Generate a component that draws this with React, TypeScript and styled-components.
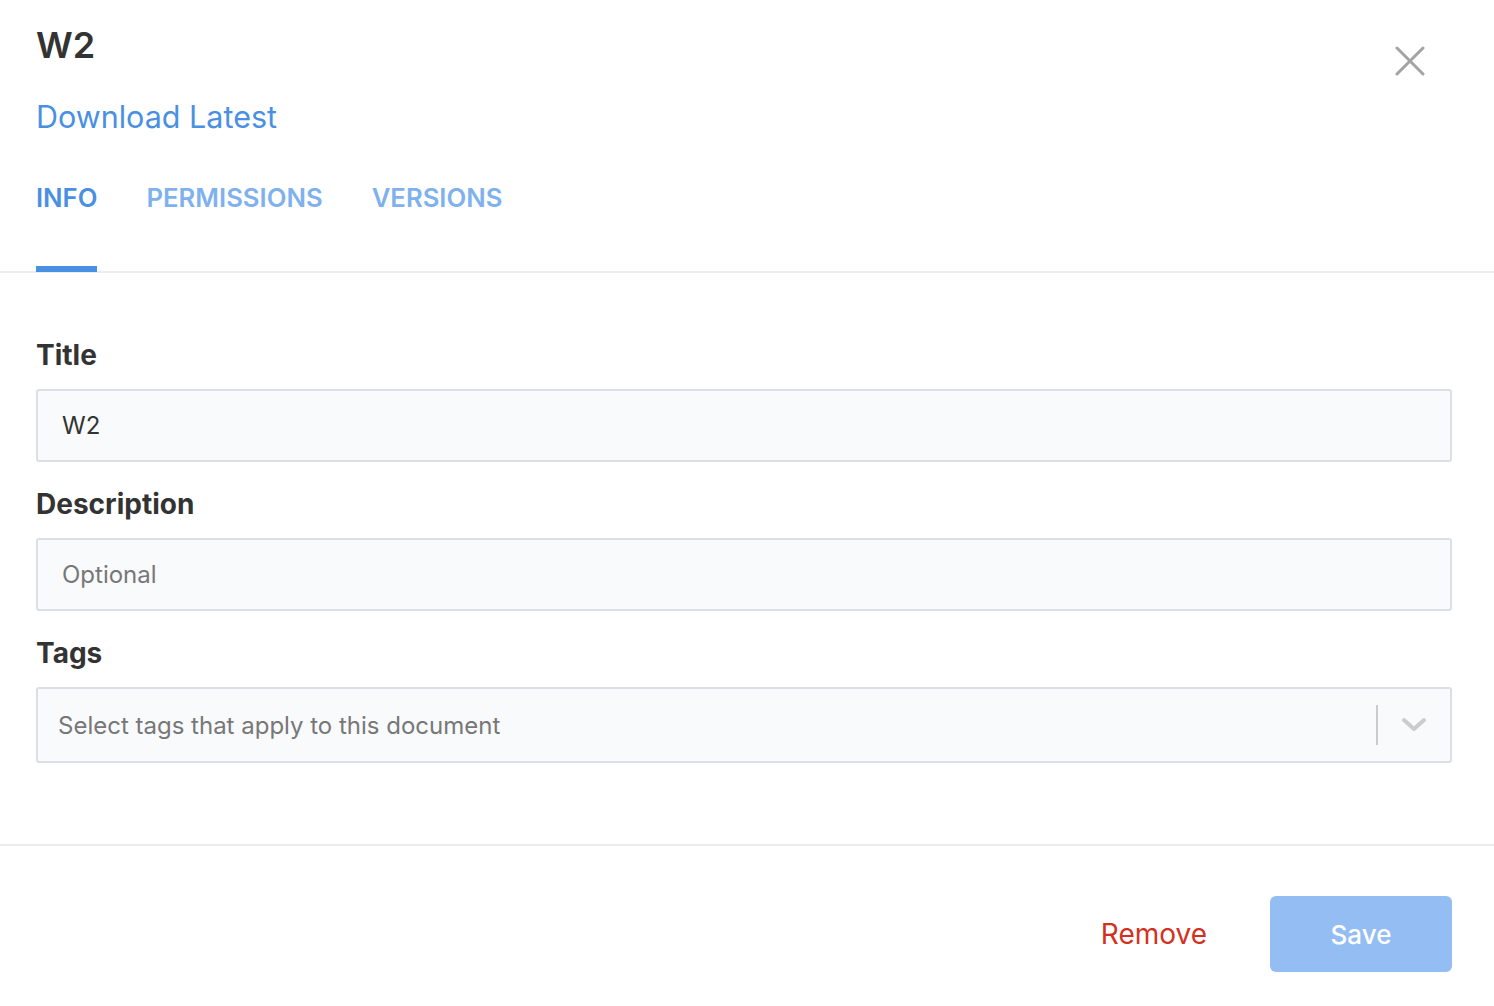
import React from 'react';
import styled, { createGlobalStyle } from 'styled-components';

const blue = '#4a90e2';
const lightBlue = '#7fb1ef';
const textDark = '#333333';
const borderColor = '#dcdee6';

const GlobalStyle = createGlobalStyle`
  html, body {
    margin: 0;
    padding: 0;
    background: #fff;
  }
  body {
    font-family: Inter, "Noto Sans", "Liberation Sans", sans-serif;
    color: ${textDark};
  }
  * { box-sizing: border-box; }
`;

const Modal = styled.div`
  width: 1494px;
  min-height: 1006px;
  display: flex;
  flex-direction: column;
`;

const Header = styled.div`
  display: flex;
  justify-content: space-between;
  align-items: flex-start;
  padding: 23px 42px 0 36px;
`;

const HeaderText = styled.div`
  display: flex;
  flex-direction: column;
`;

const DocTitle = styled.h1`
  margin: 0;
  font-size: 36px;
  line-height: 44px;
  font-weight: 600;
  color: ${textDark};
`;

const DownloadLink = styled.a`
  margin-top: 32px;
  font-size: 30.5px;
  line-height: 36px;
  color: ${blue};
  text-decoration: none;
  cursor: pointer;
`;

const CloseButton = styled.button`
  margin: 22px 26px 0 0;
  width: 32px;
  height: 32px;
  padding: 0;
  border: none;
  background: transparent;
  display: flex;
  align-items: center;
  justify-content: center;
  cursor: pointer;
`;

const TabBar = styled.div`
  display: flex;
  gap: 49px;
  padding: 0 36px;
  margin-top: 47px;
  border-bottom: 2px solid #ecedf1;
`;

const Tab = styled.div<{ $active?: boolean }>`
  font-size: 25.7px;
  line-height: 32px;
  font-weight: 600;
  color: ${p => (p.$active ? blue : lightBlue)};
  padding-bottom: 52px;
  border-bottom: 6px solid ${p => (p.$active ? blue : 'transparent')};
  margin-bottom: -1px;
  cursor: pointer;
`;

const Form = styled.div`
  display: flex;
  flex-direction: column;
  padding: 65px 42px 81px 36px;
  border-bottom: 2px solid #ecedf1;
`;

const Field = styled.div`
  display: flex;
  flex-direction: column;
  gap: 17px;
  & + & {
    margin-top: 25px;
  }
`;

const Label = styled.label`
  font-size: 28px;
  line-height: 34px;
  font-weight: 700;
  color: ${textDark};
`;

const TextInput = styled.input`
  height: 73px;
  width: 100%;
  border: 2px solid ${borderColor};
  border-radius: 3px;
  background: #f9fafc;
  padding: 0 24px;
  font-family: inherit;
  font-size: 24px;
  color: ${textDark};
  outline: none;
  &::placeholder {
    color: #777;
  }
`;

const SelectBox = styled.div`
  height: 76px;
  display: flex;
  align-items: center;
  border: 2px solid ${borderColor};
  border-radius: 3px;
  background: #f9fafc;
  padding-left: 20px;
  cursor: pointer;
`;

const Placeholder = styled.span`
  flex: 1;
  font-size: 24px;
  color: #777;
`;

const Separator = styled.span`
  width: 2px;
  height: 40px;
  background: #cccccc;
`;

const Indicator = styled.span`
  width: 72px;
  display: flex;
  align-items: center;
  justify-content: center;
`;

const Footer = styled.div`
  display: flex;
  justify-content: flex-end;
  align-items: center;
  gap: 63px;
  padding: 50px 42px 34px 36px;
`;

const RemoveButton = styled.button`
  border: none;
  background: transparent;
  color: #d3311f;
  font-family: inherit;
  font-size: 28px;
  padding: 0;
  height: 76px;
  cursor: pointer;
`;

const SaveButton = styled.button`
  width: 182px;
  height: 76px;
  border: none;
  border-radius: 6px;
  background: #93bdf3;
  color: #fff;
  font-family: inherit;
  font-size: 26px;
  font-weight: 500;
  cursor: pointer;
`;

const tabs = ['INFO', 'PERMISSIONS', 'VERSIONS'];

export default function App() {
  return (
    <>
      <GlobalStyle />
      <Modal>
        <Header>
          <HeaderText>
            <DocTitle>W2</DocTitle>
            <DownloadLink>Download Latest</DownloadLink>
          </HeaderText>
          <CloseButton aria-label="Close">
            <svg width="30" height="30" viewBox="0 0 30 30">
              <path d="M2 2 L28 28 M28 2 L2 28" stroke="#a3a3a3" strokeWidth="3" strokeLinecap="round" />
            </svg>
          </CloseButton>
        </Header>

        <TabBar>
          {tabs.map((t, i) => (
            <Tab key={t} $active={i === 0}>{t}</Tab>
          ))}
        </TabBar>

        <Form>
          <Field>
            <Label>Title</Label>
            <TextInput defaultValue="W2" />
          </Field>
          <Field>
            <Label>Description</Label>
            <TextInput placeholder="Optional" />
          </Field>
          <Field>
            <Label>Tags</Label>
            <SelectBox>
              <Placeholder>Select tags that apply to this document</Placeholder>
              <Separator />
              <Indicator>
                <svg width="26" height="16" viewBox="0 0 26 16">
                  <path d="M3 3 L13 12 L23 3" stroke="#cccccc" strokeWidth="4" fill="none" strokeLinecap="round" strokeLinejoin="round" />
                </svg>
              </Indicator>
            </SelectBox>
          </Field>
        </Form>

        <Footer>
          <RemoveButton>Remove</RemoveButton>
          <SaveButton>Save</SaveButton>
        </Footer>
      </Modal>
    </>
  );
}
